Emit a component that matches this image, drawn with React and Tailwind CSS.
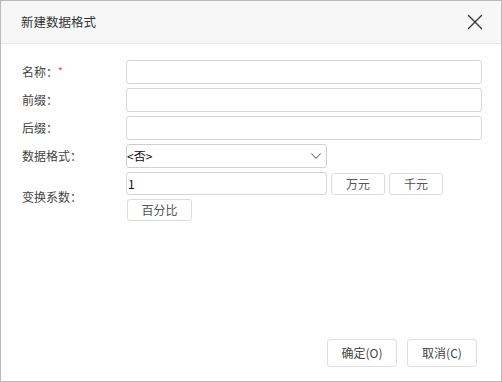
import { X, ChevronDown } from 'lucide-react';

const font = { fontFamily: '"Noto Sans CJK SC", "Noto Sans", sans-serif' };

function Field() {
  return <div className="h-[24px] w-[356px] rounded-[3px] border border-[#d6d6d6] bg-white" />;
}

function SmallButton({ children, width }) {
  return (
    <button className={`h-[22px] ${width} rounded-[3px] border border-[#dcdcdc] bg-white text-[12px] text-[#555] leading-none`}>
      {children}
    </button>
  );
}

export default function App() {
  return (
    <div className="w-[502px] h-[382px] flex flex-col border border-[#b9b9b9] bg-white" style={font}>
      {/* Header */}
      <div className="h-[43px] flex items-center justify-between pl-[20px] pr-[13px] bg-[#f7f7f7] border-b border-[#e6e6e6] shrink-0">
        <span className="text-[12.5px] text-[#333]">新建数据格式</span>
        <X className="w-[26px] h-[26px] text-[#333]" strokeWidth={1.2} />
      </div>

      {/* Body */}
      <div className="flex-1 pl-[21px] pt-[16px] flex flex-col gap-[4px]">
        <div className="flex items-center">
          <div className="w-[104px] text-[12px] text-[#444]">
            名称：<span className="text-[#e33] text-[10px] align-top">*</span>
          </div>
          <Field />
        </div>
        <div className="flex items-center">
          <div className="w-[104px] text-[12px] text-[#444]">前缀：</div>
          <Field />
        </div>
        <div className="flex items-center">
          <div className="w-[104px] text-[12px] text-[#444]">后缀：</div>
          <Field />
        </div>
        <div className="flex items-center">
          <div className="w-[104px] text-[12px] text-[#444]">数据格式：</div>
          <div className="h-[24px] w-[201px] rounded-[3px] border border-[#cfcfcf] bg-white flex items-center justify-between pr-[1px]">
            <span className="text-[12px] text-[#111] leading-none">&lt;否&gt;</span>
            <ChevronDown className="w-[18px] h-[18px] text-[#444]" strokeWidth={1.3} />
          </div>
        </div>
        <div className="flex items-center">
          <div className="w-[104px] text-[12px] text-[#444]">变换系数：</div>
          <div className="flex flex-col">
            <div className="flex items-center gap-[4px]">
              <div className="h-[23px] w-[201px] rounded-[3px] border border-[#d6d6d6] bg-white flex items-center pl-[1px]">
                <span className="text-[12px] text-[#111] leading-none">1</span>
              </div>
              <SmallButton width="w-[54px]">万元</SmallButton>
              <SmallButton width="w-[54px]">千元</SmallButton>
            </div>
            <div className="pt-[1px] pl-[1px]">
              <SmallButton width="w-[65px]">百分比</SmallButton>
            </div>
          </div>
        </div>
      </div>

      {/* Footer */}
      <div className="flex justify-end gap-[10px] pr-[24px] pb-[14px] shrink-0">
        <button className="h-[28px] w-[70px] rounded-[3px] border border-[#e0e0e0] bg-white text-[12px] text-[#444]">确定(O)</button>
        <button className="h-[28px] w-[70px] rounded-[3px] border border-[#e0e0e0] bg-white text-[12px] text-[#444]">取消(C)</button>
      </div>
    </div>
  );
}
